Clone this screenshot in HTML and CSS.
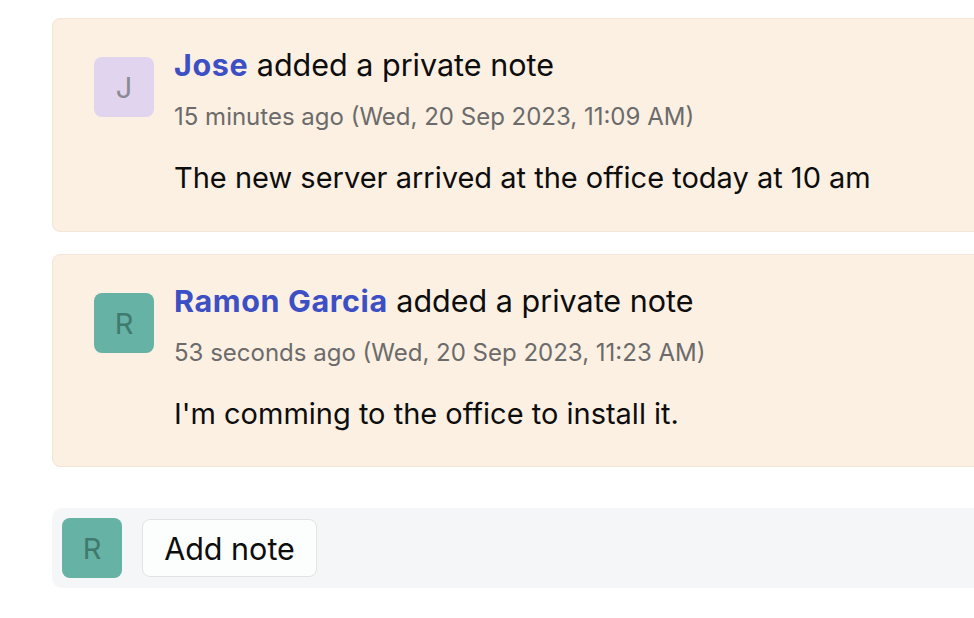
FILE: index.html
```html
<!DOCTYPE html>
<html>
<head>
<meta charset="utf-8">
<link rel="stylesheet" href="styles.css">
</head>
<body>
<div class="feed">
  <div class="note">
    <div class="avatar avatar-j">J</div>
    <div class="note-body">
      <div class="title"><a class="author">Jose</a> added a private note</div>
      <div class="time">15 minutes ago (Wed, 20 Sep 2023, 11:09 AM)</div>
      <div class="text">The new server arrived at the office today at 10 am</div>
    </div>
  </div>
  <div class="note">
    <div class="avatar avatar-r">R</div>
    <div class="note-body">
      <div class="title"><a class="author">Ramon Garcia</a> added a private note</div>
      <div class="time">53 seconds ago (Wed, 20 Sep 2023, 11:23 AM)</div>
      <div class="text">I'm comming to the office to install it.</div>
    </div>
  </div>
  <div class="composer">
    <div class="avatar avatar-r">R</div>
    <button class="add-btn">Add note</button>
  </div>
</div>
</body>
</html>
```
FILE: styles.css
```css
html, body {
  margin: 0;
  padding: 0;
  background: #ffffff;
  overflow: hidden;
}
body {
  font-family: Inter, "Noto Sans", sans-serif;
  color: #0d0d0d;
}
.feed {
  margin: 18px -40px 0 52px;
  display: flex;
  flex-direction: column;
}
.note {
  display: flex;
  gap: 20px;
  background: #fcf0e3;
  border: 1px solid #f3e5d8;
  border-radius: 8px;
  padding: 38px 0 0 41px;
  box-sizing: border-box;
  height: 214px;
  margin-bottom: 22px;
}
.note + .note {
  height: 213px;
  margin-bottom: 41px;
}
.avatar {
  width: 60px;
  height: 60px;
  border-radius: 8px;
  display: flex;
  align-items: center;
  justify-content: center;
  font-size: 29px;
  flex-shrink: 0;
}
.avatar-j {
  background: #e0d4ee;
  color: #8c8a91;
}
.avatar-r {
  background: #66b2a4;
  color: #3f7a6d;
}
.note-body {
  display: flex;
  flex-direction: column;
}
.title {
  font-size: 30.5px;
  line-height: 34px;
  margin-top: -9px;
}
.author {
  color: #3d4fc4;
  font-weight: 700;
  letter-spacing: 0.6px;
}
.time {
  font-size: 24px;
  line-height: 28px;
  color: #6b6b6b;
  margin-top: 21px;
}
.text {
  font-size: 29px;
  line-height: 34px;
  margin-top: 30px;
}
.composer {
  display: flex;
  align-items: center;
  gap: 20px;
  background: #f5f6f8;
  border-radius: 10px 0 0 10px;
  height: 80px;
  padding-left: 10px;
}
.add-btn {
  font-family: Inter, "Noto Sans", sans-serif;
  font-size: 30.5px;
  color: #0d0d0d;
  background: #fcfdfd;
  border: 1.5px solid #e2e3e3;
  border-radius: 8px;
  width: 175px;
  height: 58px;
  padding: 0;
}
```
